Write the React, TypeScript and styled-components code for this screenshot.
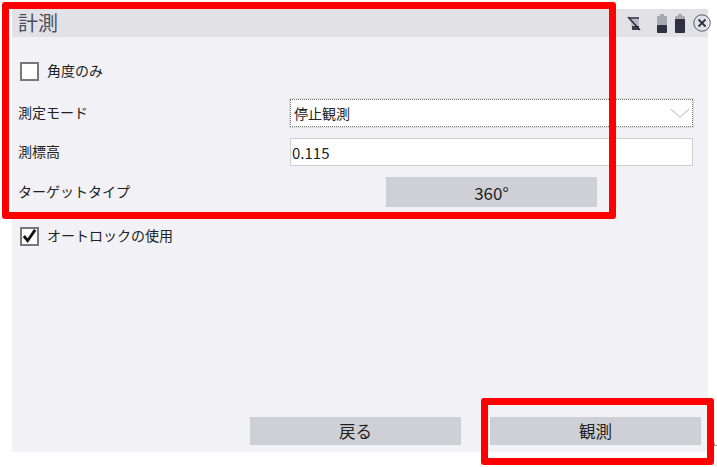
import React from "react"
import styled, { createGlobalStyle } from "styled-components"

const GlobalStyle = createGlobalStyle`
  html, body {
    margin: 0;
    padding: 0;
    background: #fff;
  }
  * {
    box-sizing: border-box;
  }
`

const App = () => {
  return (
    <Page>
      <GlobalStyle />
      <Panel>
        <TitleBar>
          <Title>計測</Title>
          <StatusIcons>
            <SimIcon />
            <BatteryIcon level={8} />
            <BatteryIcon level={14} />
            <CloseIcon />
          </StatusIcons>
        </TitleBar>
        <Body>
          <CheckRow>
            <CheckBox />
            <Label>角度のみ</Label>
          </CheckRow>
          <FieldRow>
            <Label>測定モード</Label>
            <Select>
              <span>停止観測</span>
              <Chevron viewBox="0 0 20 10">
                <path d="M0.5 1 L10 9 L19.5 1" />
              </Chevron>
            </Select>
          </FieldRow>
          <FieldRow>
            <Label>測標高</Label>
            <Input>0.115</Input>
          </FieldRow>
          <FieldRow>
            <Label>ターゲットタイプ</Label>
            <TargetButton>360°</TargetButton>
          </FieldRow>
          <AutoLockRow>
            <CheckBox>
              <svg width="16" height="16" viewBox="0 0 16 16">
                <path d="M2 8 L6 13 L14 1.5" fill="none" stroke="#111" strokeWidth="3" />
              </svg>
            </CheckBox>
            <Label>オートロックの使用</Label>
          </AutoLockRow>
        </Body>
        <Footer>
          <FooterButton>戻る</FooterButton>
          <FooterButton>観測</FooterButton>
        </Footer>
      </Panel>
      <TopFrame />
      <BottomFrame />
      <CornerMark />
    </Page>
  )
}

export default App

const SimIcon = () => (
  <svg width="14" height="15" viewBox="0 0 14 15">
    <path d="M2 1 H12 V14 H5 L4 6 Z" fill="#b9bac2" />
    <path d="M2 1 H12 V3 H2 Z" fill="#55586a" />
    <path d="M5 10 H12 V14 H5 Z" fill="#3b3d4b" />
    <path d="M1 1 L13 14" stroke="#2d2f3c" strokeWidth="1.6" />
  </svg>
)

const BatteryIcon = ({ level }: { level: number }) => (
  <svg width="10" height="19" viewBox="0 0 10 19">
    <rect x="3" y="0" width="4" height="2" fill="#a9a9b0" />
    <rect x="0" y="2" width="10" height="17" rx="1" fill="#a9a9b0" />
    <rect x="0" y={19 - level} width="10" height={level} rx="1" fill="#2f3140" />
  </svg>
)

const CloseIcon = () => (
  <svg width="18" height="18" viewBox="0 0 18 18">
    <circle cx="9" cy="9" r="8.2" fill="none" stroke="#55586a" strokeWidth="1" />
    <path d="M5.5 5.5 L12.5 12.5 M12.5 5.5 L5.5 12.5" stroke="#2f3140" strokeWidth="1.8" />
  </svg>
)

const Page = styled.div`
  position: relative;
  width: 717px;
  height: 467px;
  padding: 9px 9px 15px 12px;
  overflow: hidden;
  background: #fff;
  font-family: "Noto Sans CJK JP", "Noto Sans", sans-serif;
  color: #222;
`

const Panel = styled.div`
  display: flex;
  flex-direction: column;
  height: 100%;
  background: #f1f1f6;
`

const TitleBar = styled.div`
  display: flex;
  align-items: center;
  justify-content: space-between;
  height: 28px;
  padding-left: 6px;
  background: #e2e2e6;
`

const Title = styled.h1`
  margin: -1px 0 0;
  font-size: 20px;
  font-weight: 400;
  line-height: 28px;
  color: #4a4d5c;
`

const StatusIcons = styled.div`
  display: flex;
  align-items: center;
  gap: 8px;
  margin-right: -3px;
  & > svg:first-child {
    margin-right: 8px;
  }
`

const Body = styled.div`
  display: flex;
  flex-direction: column;
  padding: 25px 15px 0 6px;
`

const CheckRow = styled.div`
  display: flex;
  align-items: center;
  gap: 8px;
  height: 18px;
  padding-left: 2px;
  margin-bottom: 19px;
`

const AutoLockRow = styled(CheckRow)`
  margin: 20px 0 0;
`

const CheckBox = styled.span`
  display: flex;
  align-items: center;
  justify-content: center;
  width: 19px;
  height: 19px;
  background: #fff;
  border: 2px solid #77777c;
`

const Label = styled.span`
  position: relative;
  top: -1px;
  font-size: 14px;
  line-height: 18px;
  color: #222;
`

const FieldRow = styled.div`
  display: grid;
  grid-template-columns: 272px 403px;
  align-items: center;
  margin-bottom: 11px;
  &:nth-of-type(4) {
    margin-bottom: 0;
  }
`

const Select = styled.div`
  display: flex;
  align-items: center;
  justify-content: space-between;
  height: 28px;
  padding: 0 2px 0 3px;
  font-size: 14px;
  background: #fff;
  border: 1px dotted #777;
  outline: 1px solid #dcdce0;
`

const Chevron = styled.svg`
  width: 20px;
  height: 10px;
  fill: none;
  stroke: #b4b4ba;
  stroke-width: 1;
`

const Input = styled.div`
  display: flex;
  align-items: center;
  height: 28px;
  padding-left: 1px;
  font-size: 15px;
  background: #fff;
  border: 1px solid #cfcfd6;
`

const TargetButton = styled.div`
  display: flex;
  align-items: center;
  justify-content: center;
  justify-self: center;
  width: 211px;
  height: 30px;
  font-size: 17px;
  background: #cfd0d5;
`

const Footer = styled.div`
  display: flex;
  justify-content: flex-end;
  gap: 29px;
  margin-top: auto;
  padding: 0 7px 7px 0;
`

const FooterButton = styled.div`
  display: flex;
  align-items: center;
  justify-content: center;
  width: 211px;
  height: 28px;
  font-size: 16.5px;
  background: #cfd0d5;
`

const TopFrame = styled.div`
  position: absolute;
  left: 2px;
  top: 2px;
  width: 614px;
  height: 217px;
  border: 7px solid #ff0000;
  border-radius: 3px;
`

const BottomFrame = styled.div`
  position: absolute;
  left: 481px;
  top: 398px;
  width: 233px;
  height: 67px;
  border: 7px solid #ff0000;
  border-radius: 3px;
`

const CornerMark = styled.div`
  position: absolute;
  left: 714px;
  top: 443px;
  width: 3px;
  height: 3px;
  border-left: 1px solid #999;
  border-bottom: 1px solid #999;
`
